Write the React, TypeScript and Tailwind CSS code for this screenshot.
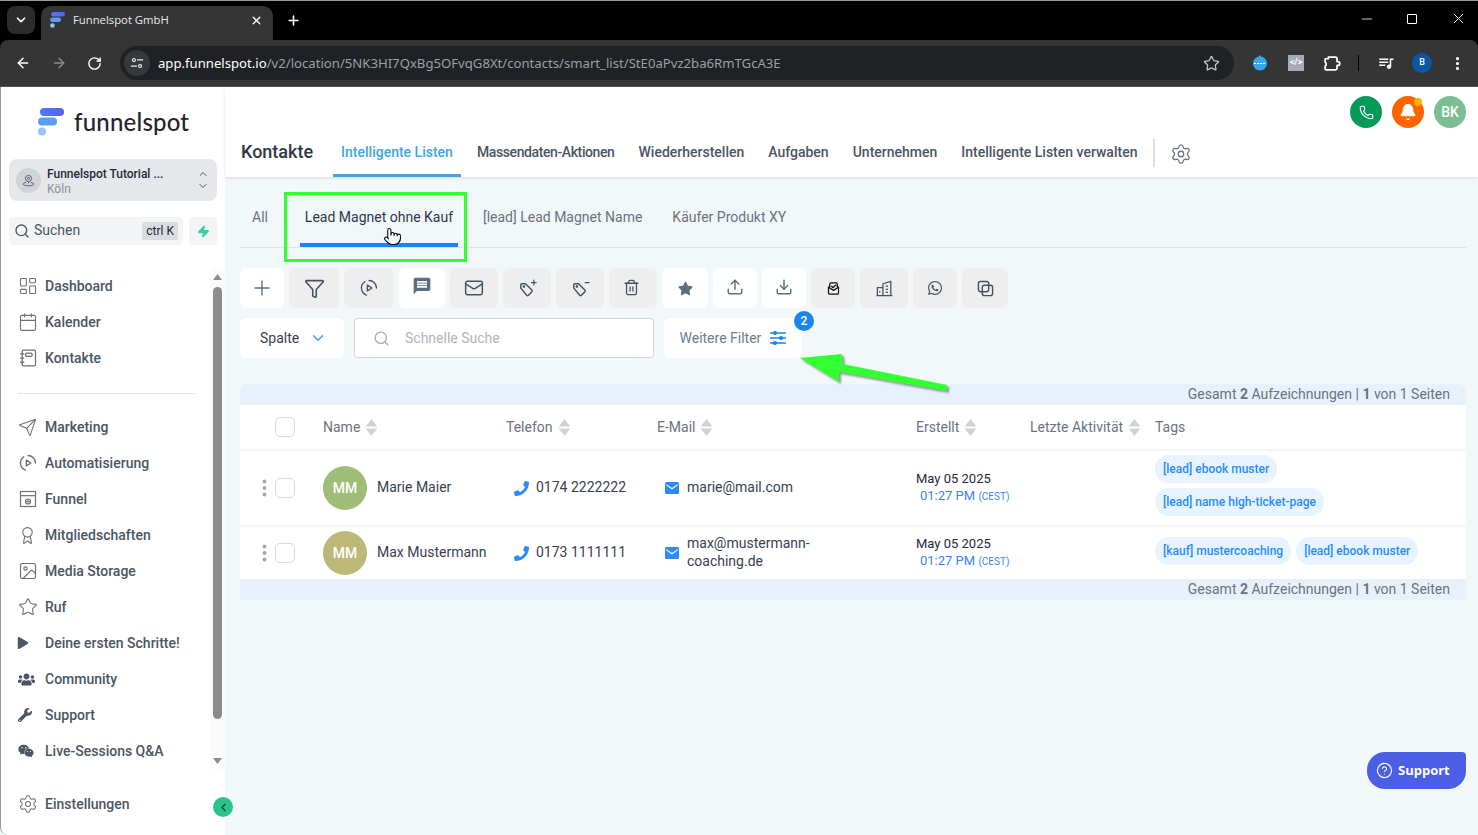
import React from "react";
import {
  LayoutDashboard, Calendar, Send, Award, Image, Star, Settings, ChevronDown, ChevronUp, ChevronLeft,
  X, Plus, ArrowLeft, ArrowRight, RotateCw, Minus, EllipsisVertical, Search, Zap, Funnel,
  Mail, Trash2, Upload, Download, Phone, Bell, Pointer, CircleHelp,
} from "lucide-react";
import { FaUsers, FaWrench, FaWeixin, FaPlay, FaPhoneAlt, FaStar, FaWhatsapp } from "react-icons/fa";
import { MdMessage, MdQueueMusic } from "react-icons/md";

const Logo = ({ className }: { className: string }) => (
  <svg viewBox="0 0 28 28" className={className}>
    <defs>
      <linearGradient id="lg1" x1="0" x2="1">
        <stop offset="0" stopColor="#4a7cf7" />
        <stop offset="1" stopColor="#5a5ff0" />
      </linearGradient>
    </defs>
    <rect x="4" y="0" width="24" height="8" rx="4" fill="url(#lg1)" />
    <rect x="2" y="9.5" width="19" height="8" rx="4" fill="#5a9df5" />
    <circle cx="6" cy="23.5" r="4" fill="#93c5fd" />
  </svg>
);

const AutoIcon = ({ className }: { className: string }) => (
  <svg viewBox="0 0 24 24" fill="none" stroke="currentColor" strokeWidth="1.6" strokeLinecap="round" strokeLinejoin="round" className={className}>
    <path d="M12 3a9 9 0 0 1 9 9" />
    <path d="M7 4.5A9 9 0 0 0 9 20.5" />
    <path d="M10 8.5v7l5.5-3.5z" />
  </svg>
);
const BookIcon = ({ className }: { className: string }) => (
  <svg viewBox="0 0 24 24" fill="none" stroke="currentColor" strokeWidth="1.5" strokeLinecap="round" strokeLinejoin="round" className={className}>
    <rect x="5" y="2.5" width="16" height="19" rx="2" />
    <rect x="9" y="6" width="8" height="4" rx="1.5" />
    <path d="M3 7h4M3 12h4M3 17h4" />
  </svg>
);
const FunnelPage = ({ className }: { className: string }) => (
  <svg viewBox="0 0 24 24" fill="none" stroke="currentColor" strokeWidth="1.4" className={className}>
    <rect x="3" y="3" width="18" height="18" />
    <path d="M3 8h18" />
    <circle cx="12" cy="15" r="3" />
    <path d="M9 15h6M12 12v6" strokeWidth="1" />
  </svg>
);
const TagIcon = ({ className, sign }: { className: string; sign: "plus" | "minus" }) => (
  <svg viewBox="0 0 24 24" fill="none" stroke="currentColor" strokeWidth="1.8" strokeLinecap="round" strokeLinejoin="round" className={className}>
    <path d="M3.5 9.5V5.5a1.5 1.5 0 0 1 1.5-1.5h4.5l8 8a1.6 1.6 0 0 1 0 2.2l-4.3 4.3a1.6 1.6 0 0 1-2.2 0z" transform="translate(0 2)" />
    <circle cx="7.5" cy="9.5" r="0.8" fill="currentColor" />
    {sign === "plus" ? <path d="M20 1.5v6M17 4.5h6" strokeWidth="1.5" /> : <path d="M18 4.5h5" strokeWidth="1.5" />}
  </svg>
);
const MailCheck = ({ className }: { className: string }) => (
  <svg viewBox="0 0 24 24" fill="none" stroke="#111" strokeWidth="2" strokeLinecap="round" strokeLinejoin="round" className={className}>
    <path d="M4 10v9a2 2 0 0 0 2 2h12a2 2 0 0 0 2-2v-9" />
    <path d="M4 10l2-1V5a2 2 0 0 1 2-2h8a2 2 0 0 1 2 2v4l2 1-8 5z" />
    <path d="M9 8.5l2.2 2.2L15.5 6.5" />
  </svg>
);
const Buildings = ({ className }: { className: string }) => (
  <svg viewBox="0 0 24 24" fill="none" stroke="currentColor" strokeWidth="1.6" strokeLinejoin="round" className={className}>
    <path d="M2 21h20" />
    <path d="M3 21V11h7" />
    <path d="M10 21V6l10-3v18" />
    <path d="M13.5 9h3M13.5 13h3M13.5 17h3M6 15v2" />
  </svg>
);
const Overlap = ({ className }: { className: string }) => (
  <svg viewBox="0 0 24 24" fill="none" stroke="currentColor" strokeWidth="2" className={className}>
    <rect x="2" y="2" width="14.5" height="14.5" rx="3" />
    <rect x="7.5" y="7.5" width="14.5" height="14.5" rx="3" />
  </svg>
);
const SortIcon = () => (
  <svg viewBox="0 0 12 16" className="ml-[5px] h-[17px] w-[13px]" fill="#d1d1d1">
    <path d="M6 0l5.5 7H.5z" />
    <path d="M6 16L.5 9h11z" />
  </svg>
);
const MailSquare = () => (
  <svg viewBox="0 0 14 12" className="h-[12px] w-[14px] shrink-0">
    <rect width="14" height="12" rx="1.5" fill="#2a8cf7" />
    <path d="M1.2 2.6L7 6.8l5.8-4.2" fill="none" stroke="#fff" strokeWidth="1.1" />
  </svg>
);
const Sliders = () => (
  <svg viewBox="0 0 16 14" className="ml-[9px] h-[14px] w-[16px]" stroke="#1a85f0" strokeWidth="1.6" fill="#1a85f0">
    <path d="M0 2h16M0 7h16M0 12h16" />
    <circle cx="5" cy="2" r="1.3" />
    <circle cx="11" cy="7" r="1.3" />
    <circle cx="5" cy="12" r="1.3" />
  </svg>
);

const nav1 = [
  { t: "Dashboard", i: <LayoutDashboard className="h-[20px] w-[20px]" strokeWidth={1.3} /> },
  { t: "Kalender", i: <Calendar className="h-[20px] w-[20px]" strokeWidth={1.3} /> },
  { t: "Kontakte", i: <BookIcon className="h-[20px] w-[20px]" /> },
];
const nav2 = [
  { t: "Marketing", i: <Send className="h-[19px] w-[19px]" strokeWidth={1.3} /> },
  { t: "Automatisierung", i: <AutoIcon className="h-[20px] w-[20px]" /> },
  { t: "Funnel", i: <FunnelPage className="h-[20px] w-[20px]" /> },
  { t: "Mitgliedschaften", i: <Award className="h-[19px] w-[19px]" strokeWidth={1.4} /> },
  { t: "Media Storage", i: <Image className="h-[20px] w-[20px]" strokeWidth={1.4} /> },
  { t: "Ruf", i: <Star className="h-[20px] w-[20px]" strokeWidth={1.3} /> },
  { t: "Deine ersten Schritte!", i: <FaPlay className="h-[12px] w-[12px] text-[#4b5563] -ml-[1px] mr-[1px]" /> },
  { t: "Community", i: <FaUsers className="h-[17px] w-[17px] text-[#4b5563]" /> },
  { t: "Support", i: <FaWrench className="h-[14px] w-[14px] text-[#4b5563]" /> },
  { t: "Live-Sessions Q&A", i: <FaWeixin className="h-[16px] w-[16px] text-[#4b5563]" /> },
];

const NavItem = ({ t, i }: { t: string; i: React.ReactNode }) => (
  <div className="flex h-9 items-center text-[14px] font-medium text-[#4b5563]">
    <span className="flex w-[27px] shrink-0 items-center text-[#6b6f76]">{i}</span>
    {t}
  </div>
);

const btnIcon = "h-[19px] w-[19px]";
const tools = [
  { w: "w-[44px]", on: true, i: <Plus className="h-[24px] w-[24px]" strokeWidth={1.4} /> },
  { w: "w-[50px]", i: <Funnel className="h-[21px] w-[21px]" strokeWidth={1.8} /> },
  { w: "w-[50px]", i: <AutoIcon className="h-[20px] w-[20px]" /> },
  { w: "w-[46px]", on: true, i: <MdMessage className="h-[20px] w-[20px] -translate-y-[2px]" /> },
  { w: "w-[48px]", i: <Mail className="h-[20px] w-[20px]" strokeWidth={1.8} /> },
  { w: "w-[48px]", i: <TagIcon className={btnIcon} sign="plus" /> },
  { w: "w-[48px]", i: <TagIcon className={btnIcon} sign="minus" /> },
  { w: "w-[48px]", i: <Trash2 className="h-[17px] w-[17px] -translate-x-[2px] -translate-y-[1px]" strokeWidth={1.8} /> },
  { w: "w-[46px]", on: true, i: <FaStar className="h-[15px] w-[15px]" /> },
  { w: "w-[44px]", on: true, i: <Upload className="h-[18px] w-[18px] -translate-y-[1px]" strokeWidth={1.9} /> },
  { w: "w-[44px]", on: true, i: <Download className="h-[18px] w-[18px] -translate-y-[1px]" strokeWidth={1.9} /> },
  { w: "w-[44px]", i: <MailCheck className="h-[15px] w-[15px]" /> },
  { w: "w-[48px]", i: <Buildings className={btnIcon} /> },
  { w: "w-[44px]", i: <FaWhatsapp className="h-[16px] w-[16px]" /> },
  { w: "w-[46px]", i: <Overlap className="h-[17px] w-[17px]" /> },
];

const cols = "grid grid-cols-[83px_183px_151px_259px_114px_125px_1fr]";

const Tag = ({ t }: { t: string }) => (
  <span className="flex h-[28px] items-center rounded-[14px] bg-[#e7f3ff] px-2 text-[12px] font-medium text-[#2a8cf7]">{t}</span>
);
const Total = () => (
  <span className="text-[14px] text-[#6b7280]">
    Gesamt <b className="font-bold">2</b> Aufzeichnungen | <b className="font-bold">1</b> von 1 Seiten
  </span>
);
const RowStart = () => (
  <div className="flex items-center pl-[22px]">
    <svg viewBox="0 0 5 18" className="h-[18px] w-[5px] shrink-0" fill="#a3a8b0">
      <circle cx="2.5" cy="2.5" r="2" />
      <circle cx="2.5" cy="9" r="2" />
      <circle cx="2.5" cy="15.5" r="2" />
    </svg>
    <span className="ml-[8px] h-[20px] w-[20px] rounded-[5px] border border-[#d5d9e2] bg-white" />
  </div>
);
const DateCell = () => (
  <div className="flex flex-col justify-center pb-[2px] text-[13px] leading-[17px] text-[#1f2937]">
    <span>May 05 2025</span>
    <span className="pl-[4px] text-[#3b82f6]">
      01:27 PM <span className="text-[10px]">(CEST)</span>
    </span>
  </div>
);
const Head = ({ t, sort = true }: { t: string; sort?: boolean }) => (
  <div className="flex items-center text-[14px] text-[#6b7280]">
    {t}
    {sort && <SortIcon />}
  </div>
);

export default function App() {
  return (
    <div className="relative flex h-[835px] w-[1478px] flex-col overflow-hidden bg-[#f2f7fa] font-['Roboto',sans-serif]">
      {/* Browser chrome */}
      <div className="h-[87px] shrink-0 bg-black">
        <div className="flex h-[40px] items-end border-t border-[#9a9a9a] pl-[7px]">
          <div className="mb-[6px] flex h-[28px] w-[28px] items-center justify-center rounded-[8px] bg-[#2c2c2c] text-white">
            <ChevronDown className="h-[14px] w-[14px]" strokeWidth={3} />
          </div>
          <div className="ml-[6px] flex h-[34px] w-[232px] items-center rounded-t-[10px] bg-[#353535] pb-[6px] pl-[8px] pr-[10px] text-white">
            <Logo className="h-[16px] w-[16px]" />
            <span className="ml-[8px] flex-1 font-['Open_Sans',sans-serif] text-[11.3px] text-[#e8eaed]">Funnelspot GmbH</span>
            <X className="h-[13px] w-[13px]" strokeWidth={2.5} />
          </div>
          <div className="mb-[12px] ml-[13px] text-white">
            <Plus className="h-[15px] w-[15px]" strokeWidth={2.5} />
          </div>
          <div className="mb-[13px] ml-auto flex items-center text-white">
            <Minus className="mr-[32px] h-[16px] w-[16px]" strokeWidth={1.2} />
            <span className="mr-[33px] h-[10px] w-[10px] rounded-[1px] border border-white" />
            <X className="mr-[11px] h-[17px] w-[17px]" strokeWidth={1.3} />
          </div>
        </div>
        <div className="flex h-[47px] items-center rounded-t-[8px] border-b border-[#555] bg-[#353535] pl-[15px]">
          <ArrowLeft className="h-[16px] w-[16px] text-white" strokeWidth={2.2} />
          <ArrowRight className="ml-[20px] h-[16px] w-[16px] text-[#8a8a8a]" strokeWidth={2.2} />
          <RotateCw className="ml-[20px] h-[15px] w-[15px] text-white" strokeWidth={2.2} />
          <div className="ml-[18px] flex h-[34px] w-[1114px] items-center rounded-full bg-[#202124] pl-[4px] pr-[14px]">
            <div className="flex h-[26px] w-[26px] items-center justify-center rounded-full bg-[#37383b] text-[#e8eaed]">
              <svg viewBox="0 0 16 16" className="h-[14px] w-[14px]" fill="none" stroke="currentColor" strokeWidth="1.3">
                <circle cx="4.5" cy="4.5" r="1.7" />
                <path d="M8 4.5h7M1 11.5h7" />
                <circle cx="11.5" cy="11.5" r="1.7" />
              </svg>
            </div>
            <span className="ml-[8px] flex-1 whitespace-nowrap pt-[1px] font-['Noto_Sans',sans-serif] text-[13.15px] text-[#9aa0a6]">
              <span className="text-white">app.funnelspot.io</span>/v2/location/5NK3HI7QxBg5OFvqG8Xt/contacts/smart_list/StE0aPvz2ba6RmTGcA3E
            </span>
            <Star className="h-[17px] w-[17px] text-[#c4c7c5]" strokeWidth={1.8} />
          </div>
          <svg viewBox="0 0 16 16" className="ml-[18px] h-[16px] w-[16px]">
            <path d="M8 0l2.5 3h-5z" fill="#35a7ea" />
            <circle cx="8" cy="8.5" r="7" fill="#35a7ea" />
            <path d="M2 8.5h12" stroke="#fff" strokeWidth="1.2" strokeDasharray="2 1" />
          </svg>
          <span className="ml-[20px] flex h-[16px] w-[16px] items-center justify-center bg-[#a8abb3] text-[9px] font-bold text-white">&lt;/&gt;</span>
          <svg viewBox="0 0 24 24" className="ml-[18px] h-[19px] w-[19px]" fill="none" stroke="#fff" strokeWidth="2.2" strokeLinejoin="round">
            <path d="M8 4h9a2 2 0 0 1 2 2v3.5h1a2.5 2.5 0 0 1 0 5h-1V18a2 2 0 0 1-2 2H5a1 1 0 0 1-1-1v-3.5a3 3 0 0 0 0-5V6h4z" />
          </svg>
          <span className="ml-[17px] h-[16px] w-[1px] bg-black" />
          <MdQueueMusic className="ml-[18px] h-[18px] w-[18px] text-white" />
          <span className="ml-[17px] flex h-[20px] w-[20px] items-center justify-center rounded-full bg-[#0b57a4] text-[9px] font-medium text-white">B</span>
          <EllipsisVertical className="ml-[17px] h-[17px] w-[17px] text-white" strokeWidth={2.5} />
        </div>
      </div>

      <div className="flex min-h-0 flex-1">
        {/* Sidebar */}
        <aside className="flex w-[225px] shrink-0 flex-col rounded-bl-[8px] border-l border-[#999] bg-white">
          <div className="flex h-[72px] items-center pb-[2px] pl-[35px]">
            <Logo className="h-[28px] w-[28px]" />
            <span className="ml-[10px] font-['Lato',sans-serif] text-[24px] font-medium leading-none tracking-[0.2px] text-[#22262b]">funnelspot</span>
          </div>
          <div className="mx-2 flex h-[42px] w-[208px] items-center rounded-[8px] bg-[#e5e7eb] pl-[7px] pr-[8px]">
            <span className="flex h-[25px] w-[25px] items-center justify-center rounded-full bg-[#d1d3d7] text-[#4b5563]">
              <svg viewBox="0 0 16 16" className="h-[13px] w-[13px]" fill="none" stroke="currentColor" strokeWidth="1.1">
                <circle cx="8" cy="5.5" r="3.8" />
                <circle cx="8" cy="5.5" r="1.3" />
                <path d="M8 9.5v2M5 10.5c-2 .4-3.5 1-3.5 2 0 1 2 2 6.5 2s6.5-1 6.5-2c0-1-1.5-1.6-3.5-2" />
              </svg>
            </span>
            <div className="ml-[6px] flex-1 pt-[3px] text-[12px] leading-[15px]">
              <div className="font-medium text-[#1f2937]">Funnelspot Tutorial ...</div>
              <div className="text-[#8b9098]">Köln</div>
            </div>
            <div className="flex flex-col text-[#4b5563]">
              <ChevronUp className="h-[12px] w-[12px]" strokeWidth={2} />
              <ChevronDown className="h-[12px] w-[12px]" strokeWidth={2} />
            </div>
          </div>
          <div className="mx-2 mt-4 flex h-[28px] gap-[6px]">
            <div className="flex w-[174px] items-center rounded-[4px] bg-[#f3f4f6] pb-[1px] pl-[5px] pr-[5px] text-[14px] text-[#4b5563]">
              <Search className="h-[16px] w-[16px]" strokeWidth={2} />
              <span className="ml-[4px] flex-1">Suchen</span>
              <span className="flex h-[18px] items-center rounded-[2px] bg-[#d9dce1] px-[4px] text-[12px] text-[#1f2937]">ctrl K</span>
            </div>
            <div className="flex w-[28px] items-center justify-center rounded-[4px] bg-[#f3f4f6]">
              <Zap className="h-[13px] w-[13px] fill-[#34d399] text-[#34d399]" />
            </div>
          </div>
          <div className="mt-[23px] flex h-[501px]">
            <div className="w-[209px] pl-[17px] pr-[15px]">
              {nav1.map((n) => <NavItem key={n.t} {...n} />)}
              <div className="mb-[15px] mt-[17px] h-[1px] bg-[#e5e7eb]" />
              {nav2.map((n) => <NavItem key={n.t} {...n} />)}
            </div>
            <div className="w-[15px] bg-[#fbfbfb] pl-[3px] pt-[6px]">
              <svg viewBox="0 0 9 6" className="h-[6px] w-[9px]" fill="#8c8c8c"><path d="M4.5 0L9 6H0z" /></svg>
              <div className="mt-[7px] h-[432px] w-[9px] rounded-[5px] bg-[#8c8c8c]" />
              <svg viewBox="0 0 9 6" className="mt-[39px] h-[6px] w-[9px]" fill="#8c8c8c"><path d="M4.5 6L0 0h9z" /></svg>
            </div>
          </div>
          <div className="mt-[17px] pl-[17px]">
            <NavItem t="Einstellungen" i={<Settings className="h-[20px] w-[20px]" strokeWidth={1.3} />} />
          </div>
        </aside>

        {/* Main */}
        <main className="min-w-0 flex-1">
          <header className="h-[90px] bg-white pt-[9px] shadow-[0_1px_3px_rgba(0,0,0,0.12)]">
            <div className="flex justify-end gap-[10px] pr-[12px]">
              <span className="flex h-[32px] w-[32px] items-center justify-center rounded-full bg-[#059a57] text-white">
                <Phone className="h-[15px] w-[15px]" strokeWidth={1.8} />
              </span>
              <span className="relative flex h-[32px] w-[32px] items-center justify-center rounded-full bg-[#ff6400] text-white">
                <Bell className="h-[18px] w-[18px] fill-white" strokeWidth={1.5} />
                <span className="absolute right-[2px] top-[2px] h-[8px] w-[8px] rounded-full bg-[#ffb300]" />
              </span>
              <span className="flex h-[32px] w-[32px] items-center justify-center rounded-full bg-[#7cbe93] text-[14px] font-medium text-white">BK</span>
            </div>
            <div className="flex h-[49px] items-center pl-[16px] text-[14px] font-medium text-[#4b5563]">
              <span className="w-[92px] pb-[2px] text-[18px] text-[#2d3748]">Kontakte</span>
              <span className="relative flex h-full w-[128px] items-center justify-center border-b-[3px] border-[#3ea6e6] pt-[3px] text-[#3ea6e6]">Intelligente Listen</span>
              <span className="ml-[16px] tracking-[-0.4px]">Massendaten-Aktionen</span>
              <span className="ml-[24px]">Wiederherstellen</span>
              <span className="ml-[24px]">Aufgaben</span>
              <span className="ml-[24px]">Unternehmen</span>
              <span className="ml-[24px]">Intelligente Listen verwalten</span>
              <span className="ml-[16px] h-[28px] w-[2px] bg-[#dcdfe4]" />
              <Settings className="ml-[15px] mt-[2px] h-[22px] w-[22px] text-[#6b7280]" strokeWidth={1.4} />
            </div>
          </header>

          <div className="pl-[15px] pr-[12px]">
            <div className="flex h-[71px] items-start border-b border-[#dfe3e8] text-[14px] text-[#6b7280]">
              <span className="ml-[12px] flex h-[70px] items-center pt-[10px]">All</span>
              <span className="ml-[32px] flex h-[70px] w-[158px] items-center justify-center border-b-4 border-[#1a85f0] pt-[14px] text-[#2d3748]">Lead Magnet ohne Kauf</span>
              <span className="ml-[25px] flex h-[70px] items-center pt-[10px]">[lead] Lead Magnet Name</span>
              <span className="ml-[30px] flex h-[70px] items-center pt-[10px]">Käufer Produkt XY</span>
            </div>

            <div className="mt-[20px] flex gap-[5px]">
              {tools.map((b, idx) => (
                <span key={idx} className={`flex h-[40px] items-center justify-center rounded-[6px] ${b.w} ${b.on ? "bg-white text-[#5a6f80]" : "bg-[#eeeeee] text-[#45525f]"}`}>
                  {b.i}
                </span>
              ))}
            </div>

            <div className="mt-[10px] flex gap-[10px]">
              <div className="flex h-[40px] w-[104px] items-center rounded-[6px] bg-white pl-[20px] text-[14px] text-[#374151]">
                Spalte
                <ChevronDown className="ml-[10px] h-[18px] w-[18px] text-[#3b9af0]" strokeWidth={1.8} />
              </div>
              <div className="flex h-[40px] w-[300px] items-center rounded-[4px] border border-[#cfd4dc] bg-white pl-[18px] text-[14px] text-[#b0b5bc]">
                <Search className="h-[17px] w-[17px] text-[#a8b0ba]" strokeWidth={2} />
                <span className="ml-[15px]">Schnelle Suche</span>
              </div>
              <div className="relative flex h-[40px] w-[138px] items-center rounded-[6px] bg-white pl-[15.5px] text-[14px] text-[#6b7f8f]">
                Weitere Filter
                <Sliders />
                <span className="absolute -right-[12px] -top-[7px] flex h-[20px] w-[20px] items-center justify-center rounded-full bg-[#1a85f0] text-[12px] font-medium text-white">2</span>
              </div>
            </div>

            <div className="mt-[26px] flex h-[21px] items-center justify-end rounded-t-[8px] bg-[#e7f1fb] pr-[16px]">
              <Total />
            </div>
            <div className={`${cols} h-[44px] bg-white`}>
              <div className="flex items-center pl-[35px]">
                <span className="h-[20px] w-[20px] rounded-[5px] border border-[#d5d9e2]" />
              </div>
              <Head t="Name" />
              <Head t="Telefon" />
              <Head t="E-Mail" />
              <Head t="Erstellt" />
              <Head t="Letzte Aktivität" />
              <Head t="Tags" sort={false} />
            </div>

            <div className={`${cols} mt-[2px] h-[74px] bg-white text-[14px] text-[#374151]`}>
              <RowStart />
              <div className="flex items-center">
                <span className="flex h-[44px] w-[44px] items-center justify-center rounded-full bg-[#a0bd78] font-medium text-white">MM</span>
                <span className="ml-[10px] pb-[1px]">Marie Maier</span>
              </div>
              <div className="flex items-center pl-[8px]">
                <FaPhoneAlt className="h-[15px] w-[15px] -scale-x-100 text-[#2a8cf7]" />
                <span className="ml-[7px] pb-[1px]">0174 2222222</span>
              </div>
              <div className="flex items-center pl-[8px]">
                <MailSquare />
                <span className="ml-[8px] pb-[1px]">marie@mail.com</span>
              </div>
              <DateCell />
              <div />
              <div className="flex flex-col items-start gap-[5px] whitespace-nowrap pt-[4px]">
                <Tag t="[lead] ebook muster" />
                <Tag t="[lead] name high-ticket-page" />
              </div>
            </div>

            <div className={`${cols} mt-[2px] h-[52px] bg-white text-[14px] text-[#374151]`}>
              <RowStart />
              <div className="flex items-center">
                <span className="flex h-[44px] w-[44px] items-center justify-center rounded-full bg-[#bcb877] font-medium text-white">MM</span>
                <span className="ml-[10px] pb-[1px]">Max Mustermann</span>
              </div>
              <div className="flex items-center pl-[8px]">
                <FaPhoneAlt className="h-[15px] w-[15px] -scale-x-100 text-[#2a8cf7]" />
                <span className="ml-[7px] pb-[1px]">0173 1111111</span>
              </div>
              <div className="flex items-center pl-[8px]">
                <MailSquare />
                <span className="ml-[8px] pb-[3px] leading-[18px]">max@mustermann-<br />coaching.de</span>
              </div>
              <DateCell />
              <div />
              <div className="flex items-center gap-[5px] whitespace-nowrap pb-[4px]">
                <Tag t="[kauf] mustercoaching" />
                <Tag t="[lead] ebook muster" />
              </div>
            </div>

            <div className="flex h-[21px] items-center justify-end rounded-b-[4px] bg-[#e7f1fb] pr-[16px]">
              <Total />
            </div>
          </div>
        </main>
      </div>

      {/* Overlays */}
      <div className="absolute left-[284px] top-[192px] h-[70px] w-[183px] border-[3px] border-[#33ff33]" />
      <Pointer className="absolute left-[383px] top-[224px] h-[25px] w-[19px] fill-white text-black" strokeWidth={1.3} />
      <svg className="absolute left-[795px] top-[350px] h-[48px] w-[160px] drop-shadow-[2px_2px_1px_rgba(0,0,0,0.4)]" viewBox="795 350 160 48">
        <polygon points="800,358 842,354 843,364 947,385 947,391 839,372 839,382" fill="#33ff33" />
      </svg>
      <button className="absolute left-[1367px] top-[752px] flex h-[37px] w-[99px] items-center rounded-[18px] rounded-tr-[4px] bg-[#4c5ee6] pl-[9px] font-['Open_Sans',sans-serif] text-[13px] font-bold text-white">
        <CircleHelp className="h-[17px] w-[17px]" strokeWidth={1.6} />
        <span className="ml-[5px]">Support</span>
      </button>
      <span className="absolute left-[213px] top-[797px] flex h-[20px] w-[20px] items-center justify-center rounded-full bg-[#2bc48a] text-[#14532d]">
        <ChevronLeft className="h-[13px] w-[13px]" strokeWidth={2.5} />
      </span>
    </div>
  );
}
